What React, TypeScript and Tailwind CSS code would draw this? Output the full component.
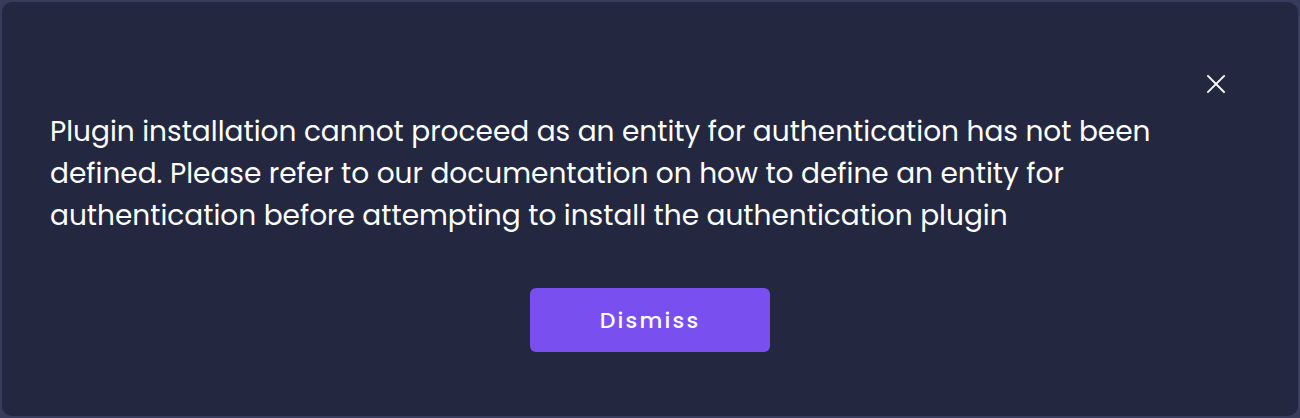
import React from "react";

export default function App() {
  return (
    <div className="w-[1300px] h-[418px] bg-[#373c5c] p-[2px]">
      <div
        className="relative w-full h-full rounded-[10px] bg-[#232840] flex flex-col"
        style={{ fontFamily: "Poppins, 'Open Sans', 'Noto Sans', sans-serif" }}
      >
        <div className="flex justify-end pt-[70px] pr-[70px]">
          <button className="w-[24px] h-[24px] flex items-center justify-center text-white">
            <svg width="20" height="20" viewBox="0 0 20 20" fill="none" stroke="currentColor" strokeWidth="1.8" strokeLinecap="square">
              <path d="M2 2L18 18M18 2L2 18" />
            </svg>
          </button>
        </div>
        <p className="mt-[15px] pl-[48px] pr-[40px] text-white text-[28px] leading-[42px] font-normal whitespace-nowrap">
          Plugin installation cannot proceed as an entity for authentication has not been
          <br />
          defined. Please refer to our documentation on how to define an entity for
          <br />
          authentication before attempting to install the authentication plugin
        </p>
        <div className="flex justify-center mt-[51px]">
          <button className="w-[240px] h-[64px] rounded-[6px] bg-[#7950ef] text-white text-[22px] font-medium tracking-[2.2px]">
            Dismiss
          </button>
        </div>
      </div>
    </div>
  );
}
